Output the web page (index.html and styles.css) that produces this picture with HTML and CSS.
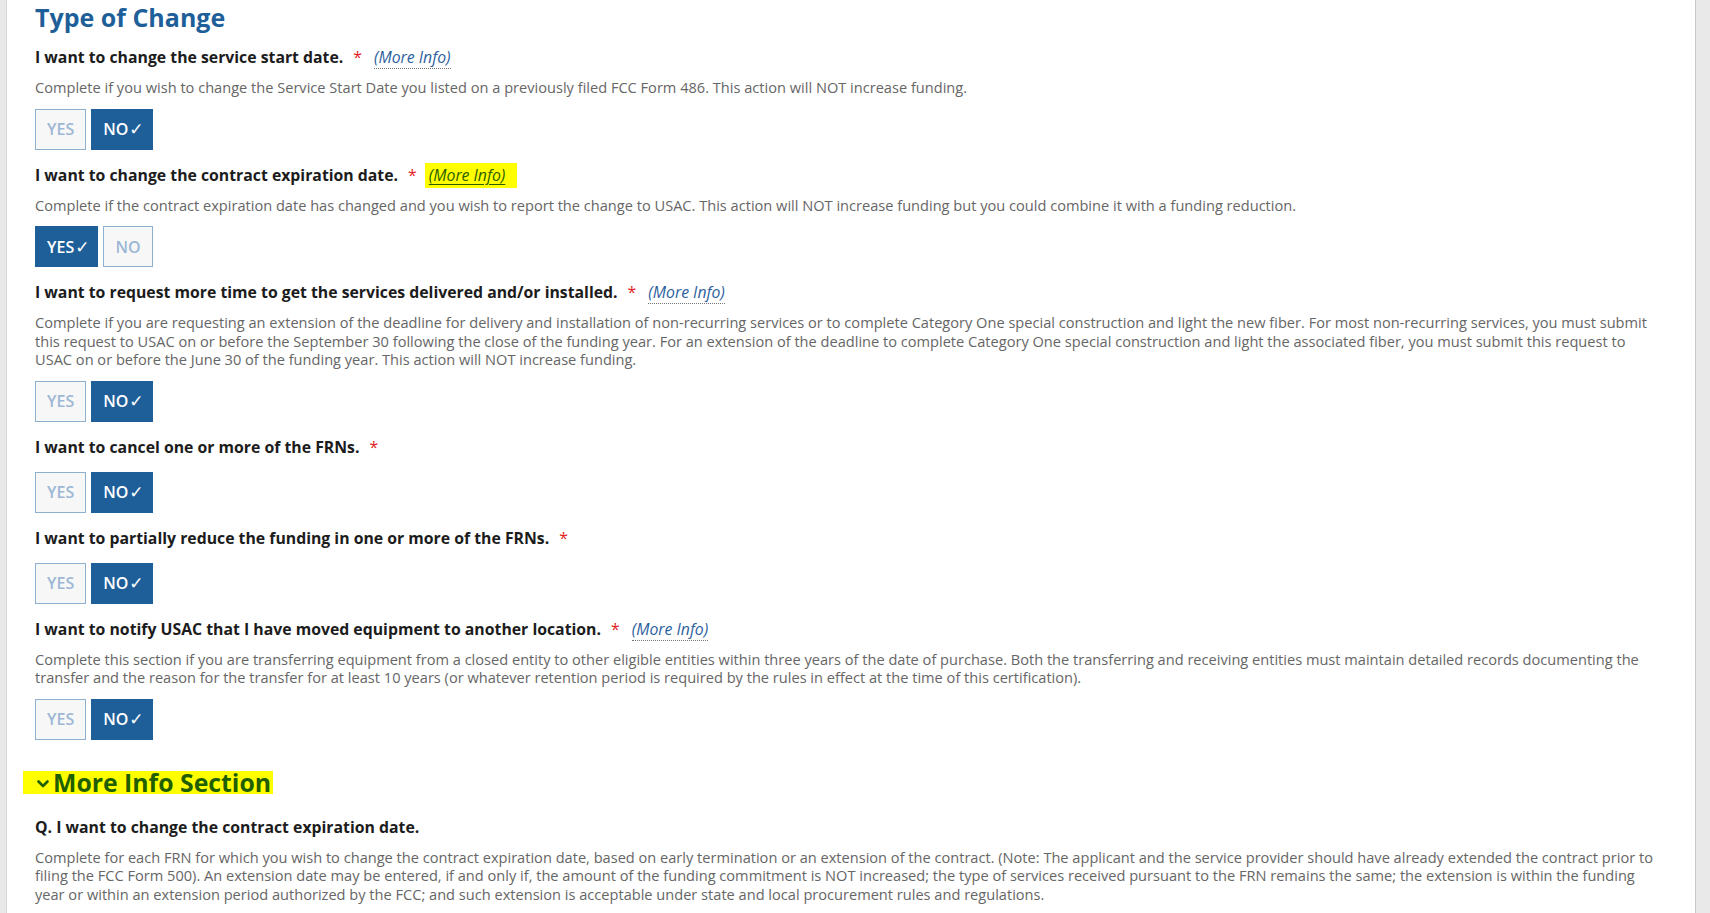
FILE: index.html
```html
<!DOCTYPE html>
<html lang="en">

<head>
    <meta charset="UTF-8">
    <title>Type of Change</title>
    <link rel="stylesheet" href="styles.css">
</head>

<body>
    <div class="page">
        <h2 class="title">Type of Change</h2>

        <!-- 1 -->
        <div class="q-label">I want to change the service start date.<span class="req">*</span><a href="javascript:;" class="more">(More Info)</a></div>
        <p class="q-desc">Complete if you wish to change the Service Start Date you listed on a previously filed FCC Form 486. This action will NOT increase funding.</p>
        <div class="toggle">
            <button class="btn">YES</button>
            <button class="btn on">NO<span class="ck">&#10003;</span></button>
        </div>

        <!-- 2 -->
        <div class="q-label">I want to change the contract expiration date.<span class="req">*</span><a href="javascript:;" class="more hl">(More Info)</a></div>
        <p class="q-desc">Complete if the contract expiration date has changed and you wish to report the change to USAC. This action will NOT increase funding but you could combine it with a funding reduction.</p>
        <div class="toggle">
            <button class="btn on">YES<span class="ck">&#10003;</span></button>
            <button class="btn">NO</button>
        </div>

        <!-- 3 -->
        <div class="q-label">I want to request more time to get the services delivered and/or installed.<span class="req">*</span><a href="javascript:;" class="more">(More Info)</a></div>
        <p class="q-desc">Complete if you are requesting an extension of the deadline for delivery and installation of non-recurring services or to complete Category One special construction and light the new fiber. For most non-recurring services, you must submit this request to USAC on or before the September 30 following the close of the funding year. For an extension of the deadline to complete Category One special construction and light the associated fiber, you must submit this request to USAC on or before the June 30 of the funding year. This action will NOT increase funding.</p>
        <div class="toggle">
            <button class="btn">YES</button>
            <button class="btn on">NO<span class="ck">&#10003;</span></button>
        </div>

        <!-- 4 -->
        <div class="q-label">I want to cancel one or more of the FRNs.<span class="req">*</span></div>
        <div class="toggle">
            <button class="btn">YES</button>
            <button class="btn on">NO<span class="ck">&#10003;</span></button>
        </div>

        <!-- 5 -->
        <div class="q-label">I want to partially reduce the funding in one or more of the FRNs.<span class="req">*</span></div>
        <div class="toggle">
            <button class="btn">YES</button>
            <button class="btn on">NO<span class="ck">&#10003;</span></button>
        </div>

        <!-- 6 -->
        <div class="q-label">I want to notify USAC that I have moved equipment to another location.<span class="req">*</span><a href="javascript:;" class="more">(More Info)</a></div>
        <p class="q-desc">Complete this section if you are transferring equipment from a closed entity to other eligible entities within three years of the date of purchase. Both the transferring and receiving entities must maintain detailed records documenting the transfer and the reason for the transfer for at least 10 years (or whatever retention period is required by the rules in effect at the time of this certification).</p>
        <div class="toggle">
            <button class="btn">YES</button>
            <button class="btn on">NO<span class="ck">&#10003;</span></button>
        </div>

        <!-- 更多信息 -->
        <h3 class="info-title"><span class="hl-block"><svg class="chev" width="12" height="8" viewBox="0 0 12 8"><path d="M1.5 1.5 L6 6 L10.5 1.5" fill="none" stroke="#1f5f00" stroke-width="2.6" stroke-linecap="round" stroke-linejoin="round"/></svg>More Info Section</span></h3>

        <div class="q-label">Q. I want to change the contract expiration date.</div>
        <p class="q-desc">Complete for each FRN for which you wish to change the contract expiration date, based on early termination or an extension of the contract. (Note: The applicant and the service provider should have already extended the contract prior to filing the FCC Form 500). An extension date may be entered, if and only if, the amount of the funding commitment is NOT increased; the type of services received pursuant to the FRN remains the same; the extension is within the funding year or within an extension period authorized by the FCC; and such extension is acceptable under state and local procurement rules and regulations.</p>
    </div>
</body>

</html>
```

FILE: styles.css
```css
* {
    margin: 0;
    padding: 0;
    box-sizing: border-box;
}

body {
    background-color: #e9e9e9;
    font-family: "Open Sans", "Liberation Sans", sans-serif;
}

.page {
    margin: 0 14px 0 6px;
    min-height: 100vh;
    background-color: #fff;
    border-left: 1px solid #d6d6d6;
    border-right: 1px solid #c9c9c9;
    padding: 1px 36px 20px 28px;
}

.title {
    font-size: 25px;
    line-height: 32px;
    font-weight: 700;
    color: #1f5f99;
    margin-bottom: 13px;
}

.q-label {
    font-size: 15.8px;
    line-height: 22px;
    font-weight: 700;
    color: #1c1c1c;
    margin-top: 14px;
    margin-bottom: 10px;
}

.title + .q-label {
    margin-top: 0;
}

.req {
    color: #e3211d;
    font-weight: 400;
    margin-left: 10px;
    margin-right: 12px;
}

.more {
    font-weight: 400;
    font-style: italic;
    color: #2d5f9e;
    text-decoration: none;
    border-bottom: 1px dotted #777;
}

/* 截图里用荧光笔标出来的部分 */
.more.hl {
    background-color: #ffff00;
    color: #2a5d00;
    border-bottom: none;
    text-decoration: underline;
    text-decoration-color: #2a5d00;
    text-underline-offset: 3px;
    padding: 1px 12px 2px 4px;
    margin-left: -4px;
}

.q-desc {
    font-size: 14.6px;
    line-height: 18.5px;
    color: #666;
    margin-bottom: 12px;
}

.toggle {
    display: flex;
    gap: 5px;
    margin-bottom: 14px;
}

.q-label + .toggle {
    margin-top: 14px;
}

.btn {
    height: 41px;
    padding: 0 11px;
    border: 1px solid #8eb0d0;
    background-color: #f7f7f7;
    color: #9cb8d4;
    font-family: "Open Sans", "DejaVu Sans", sans-serif;
    font-size: 16px;
    font-weight: 600;
    cursor: pointer;
}

.btn.on {
    background-color: #1f5f99;
    border-color: #1f5f99;
    color: #fff;
    padding: 0 8px 0 11px;
}

.ck {
    font-family: "DejaVu Sans", sans-serif;
    font-size: 17px;
    font-weight: 700;
    margin-left: 1px;
}

.info-title {
    margin-top: 26px;
    font-size: 24.8px;
    line-height: 24px;
    font-weight: 700;
    color: #1f5f00;
}

.hl-block {
    display: inline-flex;
    align-items: center;
    background-color: #ffff00;
    padding: 0 2px 0 14px;
    margin-left: -12px;
    height: 23px;
}

.chev {
    margin-right: 4px;
    margin-top: 3px;
}

.info-title + .q-label {
    margin-top: 22px;
}
```
